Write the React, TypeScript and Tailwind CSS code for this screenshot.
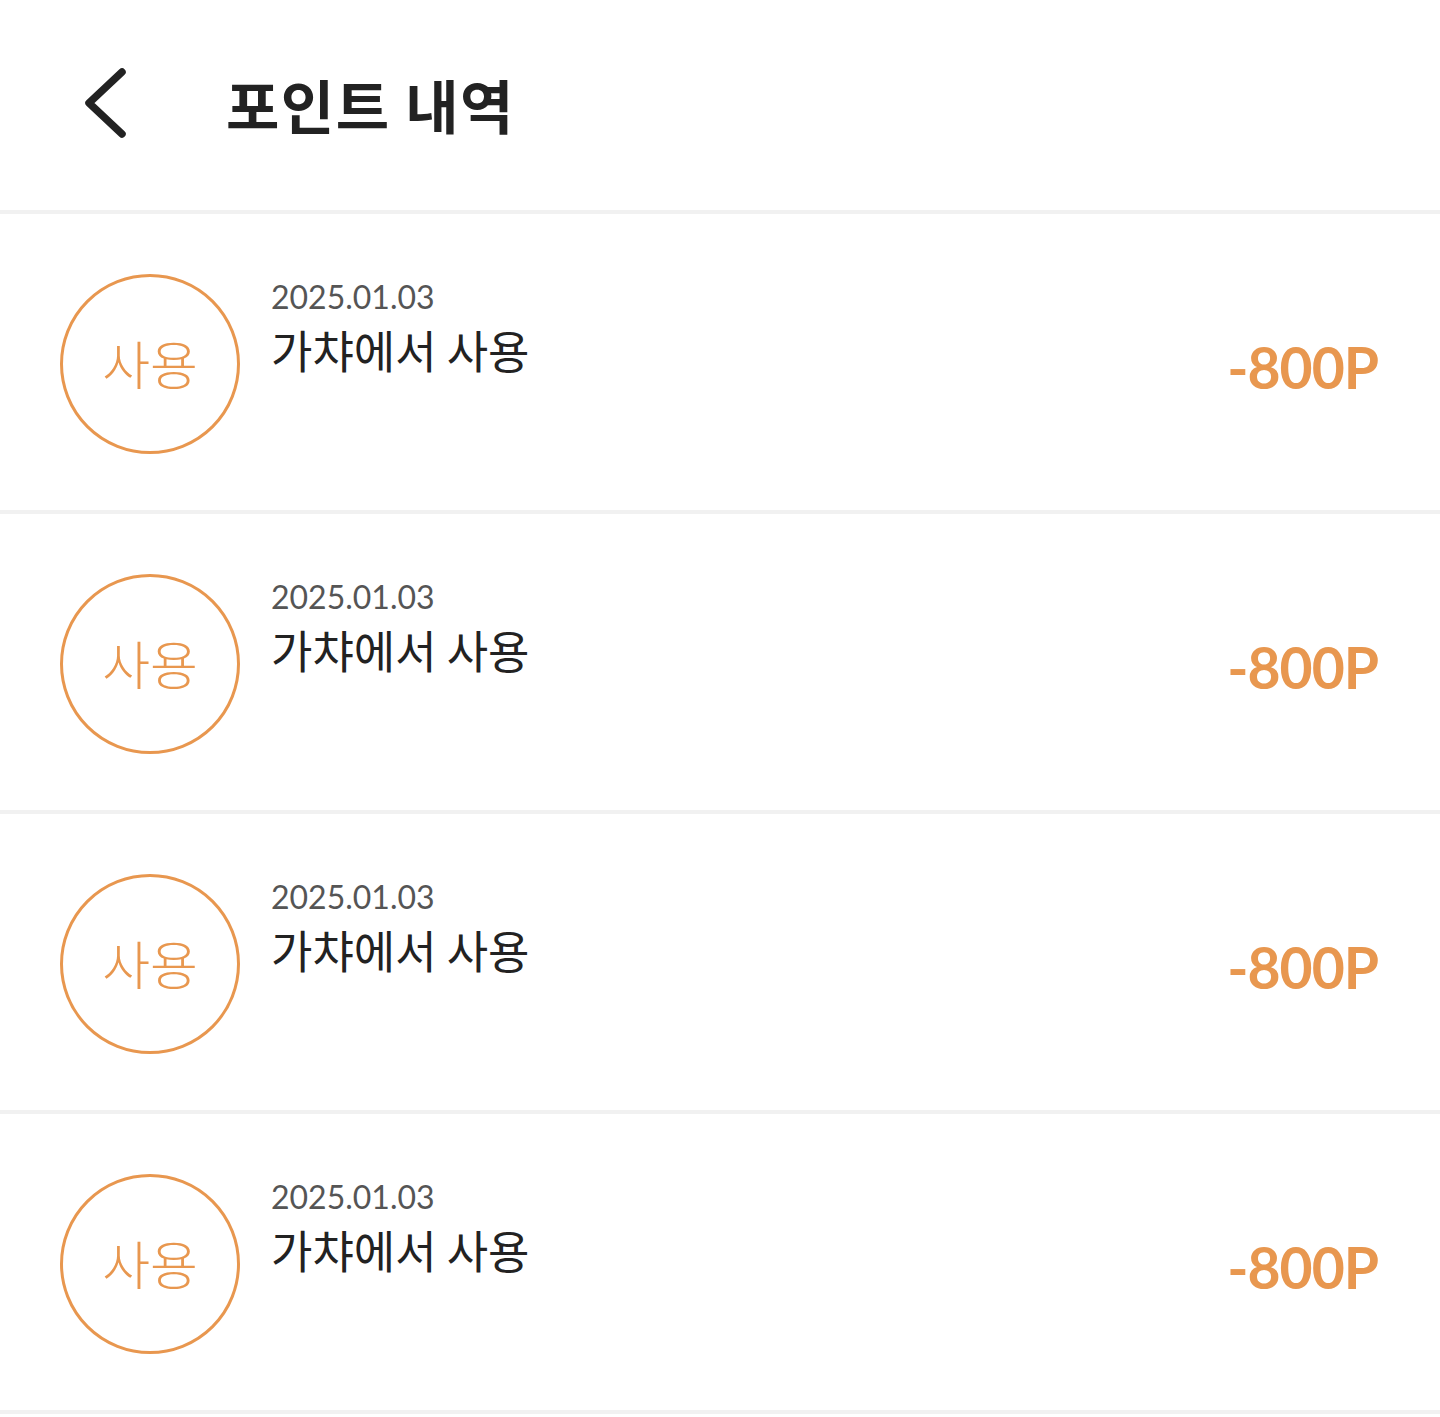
import React from "react";

const rows = [0, 1, 2, 3];

export default function App() {
  return (
    <div
      className="w-[1440px] min-h-[1417px] bg-white"
      style={{ fontFamily: "Lato, 'Noto Sans CJK KR', sans-serif" }}
    >
      <header className="h-[214px] flex items-center border-b-[4px] border-[#f1f1f1]">
        <div className="w-[226px] pl-[82px] flex items-center">
          <svg width="50" height="76" viewBox="0 0 50 76" className="-mt-[2px]">
            <path
              d="M40 6 L7 37 L40 68"
              fill="none"
              stroke="#222"
              strokeWidth="7.5"
              strokeLinecap="round"
              strokeLinejoin="round"
            />
          </svg>
        </div>
        <h1
          className="text-[58px] font-bold text-[#222] tracking-[1.5px] -mt-[2px]"
          style={{ fontFamily: "'Noto Sans CJK KR', sans-serif" }}
        >
          포인트 내역
        </h1>
      </header>
      {rows.map((i) => (
        <div
          key={i}
          className="h-[300px] flex items-center border-b-[4px] border-[#f1f1f1] pl-[60px] pr-[62px]"
        >
          <div className="w-[180px] h-[180px] rounded-full border-[3px] border-[#e8974f] flex items-center justify-center shrink-0 mt-[4px]">
            <span
              className="text-[52px] font-light text-[#e8974f] -mt-[2px]"
              style={{ fontFamily: "'Noto Sans CJK KR', sans-serif" }}
            >
              사용
            </span>
          </div>
          <div className="ml-[31px] flex flex-col self-start pt-[62px]">
            <div className="text-[32px] leading-[42px] text-[#555]">2025.01.03</div>
            <div
              className="text-[45px] leading-[60px] text-[#222] mt-[2px]"
              style={{ fontFamily: "'Noto Sans CJK KR', sans-serif" }}
            >
              가챠에서 사용
            </div>
          </div>
          <div className="ml-auto text-[57px] font-bold text-[#e8974f] tracking-[-1px] mt-[12px]">
            -800P
          </div>
        </div>
      ))}
    </div>
  );
}
